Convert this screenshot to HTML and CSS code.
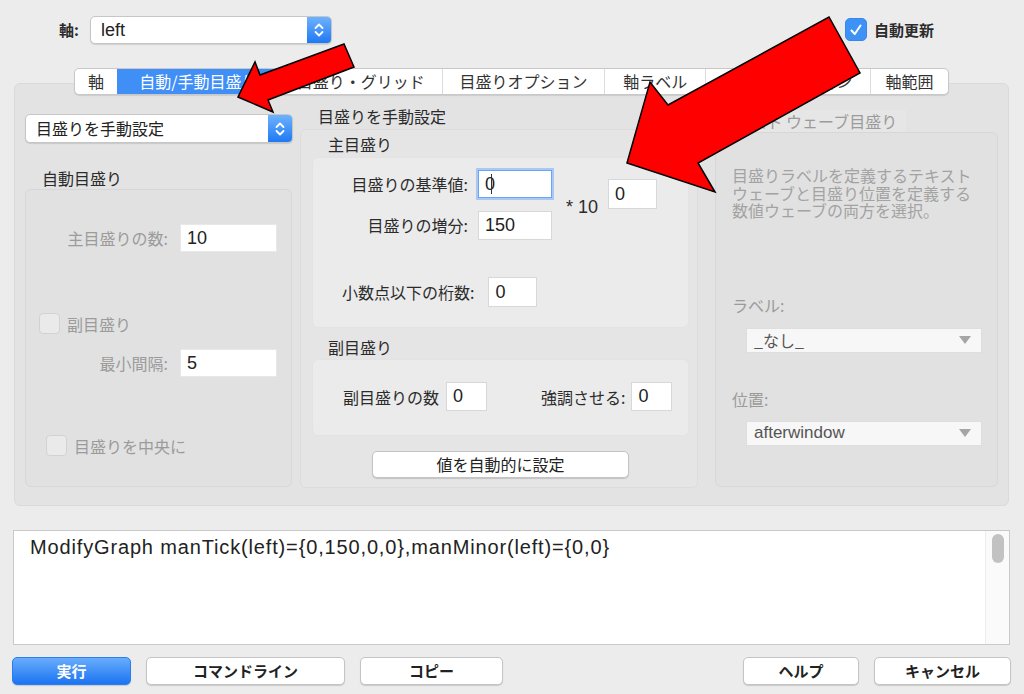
FILE: index.html
```html
<!DOCTYPE html>
<html lang="ja">
<head>
<meta charset="utf-8">
<link rel="stylesheet" href="styles.css">
</head>
<body>
<div class="window">
  <div class="topbar">
    <span class="axis-label">軸:</span>
    <div class="popup popup-axis">
      <span class="popup-text latin">left</span>
      <span class="stepper"><svg width="12" height="18" viewBox="0 0 12 18"><path d="M2.5 7 L6 3.5 L9.5 7 M2.5 11 L6 14.5 L9.5 11" fill="none" stroke="#fff" stroke-width="1.8" stroke-linecap="round" stroke-linejoin="round"/></svg></span>
    </div>
    <label class="autoupdate">
      <span class="check checked"><svg width="16" height="16" viewBox="0 0 16 16"><path d="M3.5 8.5 L6.8 12 L12.5 3.5" fill="none" stroke="#fff" stroke-width="2" stroke-linecap="round" stroke-linejoin="round"/></svg></span>
      <span>自動更新</span>
    </label>
  </div>

  <div class="tabs">
    <div class="tab t1">軸</div>
    <div class="tab t2 selected">自動/手動目盛り</div>
    <div class="tab t3">目盛り・グリッド</div>
    <div class="tab t4">目盛りオプション</div>
    <div class="tab t5">軸ラベル</div>
    <div class="tab t6">ラベルオプション</div>
    <div class="tab t7">軸範囲</div>
  </div>

  <div class="panel">
    <div class="col-left">
      <div class="popup popup-mode">
        <span class="popup-text">目盛りを手動設定</span>
        <span class="stepper"><svg width="12" height="18" viewBox="0 0 12 18"><path d="M2.5 7 L6 3.5 L9.5 7 M2.5 11 L6 14.5 L9.5 11" fill="none" stroke="#fff" stroke-width="1.8" stroke-linecap="round" stroke-linejoin="round"/></svg></span>
      </div>
      <div class="group-title left-title">自動目盛り</div>
      <div class="group auto-group">
        <div class="frow r1"><span class="dim">主目盛りの数:</span><span class="field f97 latin">10</span></div>
        <div class="crow c1"><span class="check"></span><span class="dim">副目盛り</span></div>
        <div class="frow r2"><span class="dim">最小間隔:</span><span class="field f97 latin">5</span></div>
        <div class="crow c2"><span class="check"></span><span class="dim">目盛りを中央に</span></div>
      </div>
    </div>

    <div class="col-mid">
      <div class="group-title mid-title">目盛りを手動設定</div>
      <div class="group manual-group">
        <div class="sub-title">主目盛り</div>
        <div class="inner major">
          <div class="major-grid">
            <span class="lab la">目盛りの基準値:</span>
            <span class="field fbase focused latin">0<i class="caret"></i></span>
            <span class="times latin">* 10</span>
            <span class="field fexp latin">0</span>
            <span class="lab lb">目盛りの増分:</span>
            <span class="field finc latin">150</span>
          </div>
          <div class="drow"><span>小数点以下の桁数:</span><span class="field fdig latin">0</span></div>
        </div>
        <div class="sub-title minor-title">副目盛り</div>
        <div class="inner minor">
          <span>副目盛りの数</span><span class="field fmin latin">0</span>
          <span class="emph">強調させる:</span><span class="field fmin latin">0</span>
        </div>
        <div class="btn-row"><button class="btn auto-btn">値を自動的に設定</button></div>
      </div>
    </div>

    <div class="col-right">
      <div class="wave-title"><span class="check small"></span><span class="dim">テキスト ウェーブ目盛り</span></div>
      <div class="group wave-group">
        <p class="desc">目盛りラベルを定義するテキスト<br>ウェーブと目盛り位置を定義する<br>数値ウェーブの両方を選択。</p>
        <div class="dim rlabel lab-label">ラベル:</div>
        <div class="dpop"><span>_なし_</span><span class="tri"></span></div>
        <div class="dim rlabel pos-label">位置:</div>
        <div class="dpop"><span class="latin">afterwindow</span><span class="tri"></span></div>
      </div>
    </div>
  </div>

  <div class="cmd">
    <div class="cmd-text">ModifyGraph manTick(left)={0,150,0,0},manMinor(left)={0,0}</div>
    <div class="scroll"><span class="thumb"></span></div>
  </div>

  <div class="buttons">
    <button class="btn bb primary">実行</button>
    <button class="btn bb w-cmd">コマンドライン</button>
    <button class="btn bb w-copy">コピー</button>
    <span class="spacer"></span>
    <button class="btn bb w-help">ヘルプ</button>
    <button class="btn bb w-cancel">キャンセル</button>
  </div>

  <svg class="arrows" width="1024" height="694" viewBox="0 0 1024 694">
    <polygon points="238,97 255,62 260,75 344,44 354,67 268,100 273,112" fill="#ff0000" stroke="#000" stroke-width="1.5" stroke-linejoin="miter"/>
    <polygon points="627,163 650,82 668,105 829,17 860,73 698,163 715,192" fill="#ff0000" stroke="#000" stroke-width="1.5" stroke-linejoin="miter"/>
  </svg>
</div>
</body>
</html>
```

FILE: styles.css
```css
* { box-sizing: border-box; }
html, body { margin: 0; padding: 0; }
body {
  width: 1024px;
  height: 694px;
  overflow: hidden;
  background: #ececec;
  font-family: "Noto Sans CJK JP", "Noto Sans", sans-serif;
  font-size: 16px;
  color: #2b2b2b;
}
.window { position: relative; width: 1024px; height: 694px; padding-top: 15px; }
.latin { font-family: "Liberation Sans", "Noto Sans CJK JP", sans-serif; }
.dim { color: #9b9b9b; }

/* top bar */
.topbar { display: flex; align-items: center; height: 29px; padding-left: 59px; padding-right: 87px; }
.axis-label { font-weight: 700; font-size: 15px; width: 31px; }
.popup {
  display: flex; height: 29px; background: #fff; border: 1px solid #c6c6c6; border-radius: 5px;
  box-shadow: 0 1px 1px rgba(0,0,0,0.12); overflow: hidden;
}
.popup-axis { width: 242px; height: 28px; }
.popup-text { flex: 1; padding-left: 10px; line-height: 27px; font-size: 16px; color: #222; }
.popup-axis .popup-text { font-size: 18px; }
.stepper {
  width: 24px; display: flex; align-items: center; justify-content: center;
  background: linear-gradient(#6db2fd, #1f79f3);
}
.autoupdate { margin-left: auto; display: flex; align-items: center; gap: 7px; font-weight: 700; font-size: 15px; position: relative; left: -3px; }
.check {
  display: inline-flex; align-items: center; justify-content: center;
  width: 21px; height: 21px; border: 1px solid #c9c9c9; border-radius: 4px; background: #f1f1f1; flex: none;
}
.check.checked { width: 22px; height: 23px; background: #3e92f6; border-color: #3886ee; border-radius: 5px; }

/* tabs */
.tabs {
  position: relative; z-index: 2; display: flex; margin-top: 24px; margin-left: 74px; width: 875px; height: 27px;
  background: #fff; border: 1px solid #c8c8c8; border-radius: 5px; box-shadow: 0 1px 1px rgba(0,0,0,0.1); overflow: hidden;
}
.tab { display: flex; align-items: center; justify-content: center; font-size: 16px; color: #333; border-left: 1px solid #dcdcdc; line-height: 25px; }
.tab.t1 { border-left: none; width: 42px; }
.t2 { width: 162px; } .t3 { width: 163px; } .t4 { width: 163px; } .t5 { width: 101px; } .t6 { width: 165px; } .t7 { width: 78px; }
.tab.selected { background: #3f8ff7; color: #fff; border-left-color: #3f8ff7; }

/* panel */
.panel {
  position: relative; z-index: 1; margin-top: -12px; margin-left: 14px; width: 995px; height: 423px;
  background: #e3e3e3; border: 1px solid #dadada; border-radius: 6px;
  display: grid; grid-template-columns: 268px 398px 283px; column-gap: 7px;
  padding: 26px 11px 0 10px;
}
.col-right { margin-left: 10px; }

.group { border: 1px solid #d7d7d7; border-radius: 6px; background: #e1e1e1; }
.group-title { font-size: 16px; line-height: 20px; color: #2b2b2b; }

/* left column */
.popup-mode { margin-top: 4px; width: 268px; height: 29px; }
.popup-mode .popup-text { font-size: 16px; line-height: 27px; }
.left-title { margin-top: 25px; padding-left: 17px; height: 20px; }
.auto-group { margin-top: 1px; width: 267px; height: 298px; display: flex; flex-direction: column; }
.frow { display: flex; align-items: center; justify-content: flex-end; gap: 12px; padding-right: 14px; height: 28px; }
.r1 { margin-top: 34px; }
.r2 { margin-top: 15px; }
.field {
  display: inline-flex; align-items: center; height: 28px; background: #fff; border: 1px solid #d8d8d8;
  padding-left: 6px; font-size: 18px; color: #222;
}
.f97 { width: 97px; border-color: #e8e8e8; }
.crow { display: flex; align-items: center; gap: 7px; height: 21px; }
.c1 { margin-top: 61px; padding-left: 13px; }
.c2 { margin-top: 58px; padding-left: 20px; }
.crow .check { background: #eaeaea; border-color: #d2d2d2; }

/* middle column */
.mid-title { margin-top: -3px; padding-left: 18px; height: 19px; line-height: 19px; }
.manual-group { margin-top: 3px; height: 359px; background: #e5e5e5; border-color: #dcdcdc; padding: 4px 8px 0 11px; }
.sub-title { font-size: 16px; line-height: 20px; padding-left: 16px; height: 20px; }
.inner { background: #ebebeb; border: 1px solid #e3e3e3; border-radius: 6px; }
.major { margin-top: 3px; height: 171px; padding-top: 12px; }
.major-grid {
  display: grid; grid-template-columns: 155px 74px 36px 49px; grid-template-rows: 28px 29px;
  column-gap: 10px; row-gap: 13px;
}
.major-grid .lab { text-align: right; line-height: 28px; font-size: 16px; }
.la { grid-column: 1; grid-row: 1; }
.lb { grid-column: 1; grid-row: 2; }
.fbase { grid-column: 2; grid-row: 1; border-color: #6aa4f2; box-shadow: 0 0 0 2px #a9c8f4; }
.finc { grid-column: 2; grid-row: 2; height: 29px; }
.times { grid-column: 3; grid-row: 1 / span 2; align-self: start; margin-top: 27px; margin-left: 4px; font-size: 18px; line-height: 20px; white-space: nowrap; }
.fexp { grid-column: 4; grid-row: 1 / span 2; align-self: start; margin-top: 9px; margin-left: 0; height: 30px; width: 49px; }
.caret { display: inline-block; width: 1px; height: 20px; background: #333; margin-left: -4px; }
.drow { display: flex; align-items: center; gap: 14px; margin-top: 37px; padding-left: 29px; height: 30px; }
.fdig { width: 49px; height: 30px; }
.minor-title { margin-top: 9px; }
.minor { margin-top: 2px; height: 77px; display: flex; align-items: center; padding-left: 30px; padding-bottom: 2px; }
.fmin { width: 41px; height: 29px; margin-left: 7px; }
.emph { margin-left: 54px; }
.emph + .fmin { margin-left: 6px; }
.btn-row { display: flex; justify-content: center; margin-top: 15px; }
.btn {
  font-family: "Noto Sans CJK JP", sans-serif; font-size: 16px; color: #222; background: #fff;
  border: 1px solid #c4c4c4; border-radius: 5px; box-shadow: 0 1px 1px rgba(0,0,0,0.15); padding: 0; cursor: default;
}
.auto-btn { width: 257px; height: 27px; line-height: 25px; }

/* right column */
.wave-title { display: flex; align-items: center; gap: 6px; height: 22px; margin-left: -22px; padding-left: 2px; }
.check.small { width: 16px; height: 16px; }
.wave-title .dim { background: #e6e6e6; padding: 0 9px 0 2px; line-height: 22px; white-space: pre; }
.wave-group { width: 283px; height: 355px; padding: 34px 10px 0 16px; }
.desc { margin: 0; font-size: 16px; line-height: 17.5px; color: #a3a3a3; white-space: nowrap; }
.rlabel { font-size: 16px; line-height: 20px; }
.lab-label { margin-top: 75px; }
.pos-label { margin-top: 36px; }
.dpop {
  display: flex; align-items: center; justify-content: space-between; margin-left: 14px; width: 236px; height: 25px;
  background: #f7f7f7; border: 1px solid #dedede; padding: 0 10px 0 7px; font-size: 16px; color: #555;
  margin-top: 13px;
}
.pos-label + .dpop { margin-top: 12px; }
.dpop .latin { font-size: 17px; }
.tri { width: 0; height: 0; border-left: 6px solid transparent; border-right: 6px solid transparent; border-top: 8px solid #a5a5a5; }

/* command area */
.cmd {
  margin-top: 24px; margin-left: 13px; width: 997px; height: 115px; background: #fff; border: 1px solid #c9c9c9;
  display: flex;
}
.cmd-text { flex: 1; padding: 5px 0 0 16px; font-family: "Liberation Sans", sans-serif; font-size: 20px; color: #222; letter-spacing: 0.85px; }
.scroll { width: 24px; border-left: 1px solid #ededed; display: flex; justify-content: center; padding-top: 3px; background: #fafafa; }
.thumb { width: 12px; height: 29px; border-radius: 6px; background: #c2c2c2; }

/* bottom buttons */
.buttons { display: flex; margin-top: 12px; padding-left: 12px; padding-right: 13px; gap: 15px; }
.bb { height: 28px; font-weight: 700; font-size: 15px; line-height: 26px; }
.spacer { flex: 1; }
.primary { width: 119px; color: #fff; background: linear-gradient(#68acfc, #1c74f2); border-color: #2a7ef0; }
.w-cmd { width: 199px; }
.w-copy { width: 143px; }
.w-help { width: 116px; }
.w-cancel { width: 137px; }

.arrows { position: absolute; left: 0; top: 0; pointer-events: none; z-index: 10; }
```
